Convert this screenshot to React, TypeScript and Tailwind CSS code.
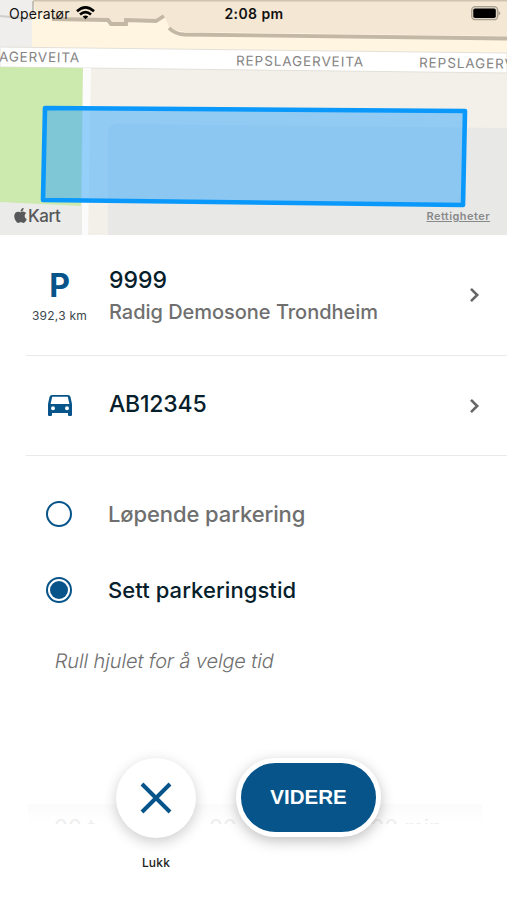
import React, { useState } from 'react';
import { FaApple } from 'react-icons/fa';

const ParkingMap = () => (
  <section className="relative h-[235px] w-full overflow-hidden">
    <svg className="block" width="507" height="235" viewBox="0 0 507 235">
      <rect width="507" height="235" fill="#f3f0ea" />
      <path d="M0 0H34V48H0Z" fill="#efeeec" />
      <path d="M0 16L32 19" stroke="#cfcdca" strokeWidth="2" />
      <path d="M32 0H507V54L32 48Z" fill="#fff5e0" />
      <path d="M33 0H507V36L186 32Q176 31 169 27L164 15L157 20L127 20V23H111L108 19L54 18L36 12Z" fill="#f4e7d3" />
      <path d="M52 19L108 20L111 24H126V20L156 21L164 16M169 28Q175 34 184 34.500L507 38.500" fill="none" stroke="#c2b8a5" strokeWidth="3.8" />
      <path d="M33 0.500H507" stroke="#cfc3b1" strokeWidth="2" />
      <path d="M33 1V14" stroke="#c6c1ba" strokeWidth="2" />
      <path d="M0 47L507 53V73L0 67Z" fill="#ffffff" stroke="#e3e0da" strokeWidth="1" />
      <path d="M108 235V134Q108 124 118 124L507 128V235Z" fill="#e8e8e7" />
      <path d="M0 202L82 206V235H0Z" fill="#ebebea" />
      <path d="M0 67L83 68L81 206L0 202Z" fill="#cce9ae" />
      <path d="M83 68H91L88 235H82Z" fill="#fbfbfb" />
      <path d="M45 108L465 111L463 205L43 200Z" fill="#38a9fb" fillOpacity="0.52" stroke="#0a99fb" strokeWidth="4.6" strokeLinejoin="round" />
    </svg>
    <svg className="absolute inset-0" width="507" height="235" fontFamily="Inter, sans-serif" fontSize="13.5" fill="#858483">
      <text x="-1" y="61.5" textLength="80" transform="rotate(0.7 0 61)">AGERVEITA</text>
      <text x="236" y="65.500" textLength="127" transform="rotate(0.5 236 65)">REPSLAGERVEITA</text>
      <text x="419" y="67.500" textLength="127" transform="rotate(0.7 419 67)">REPSLAGERVEITA</text>
    </svg>
    <div className="absolute bottom-[8px] left-[12px] flex items-center text-[#57585a]">
      <FaApple size={17} className="-mt-[2px] -mr-[1px]" />
      <span className="text-[17px] leading-[22px] font-medium tracking-[-0.4px]">Kart</span>
    </div>
    <a href="#" className="absolute right-[17px] bottom-[11px] text-[11px] leading-4 font-semibold tracking-[0.45px] text-[#88898a] underline">
      Rettigheter
    </a>
  </section>
);

const StatusBar = () => (
  <header className="absolute inset-x-0 top-0 flex h-[27px] items-center justify-between pr-[6px] pl-[9px] text-[#111]">
    <div className="flex w-[190px] items-center gap-[6px]">
      <span className="text-[14px] tracking-[0.25px]">Operatør</span>
      <svg className="-mt-[2px]" width="19" height="14" viewBox="0 0 19 14" fill="none" stroke="#000" strokeWidth="2.6">
        <path d="M1 5.300Q9.500-2.500 18 5.300" />
        <path d="M4 8.500Q9.500 3.700 15 8.500" />
        <path d="M9.500 13.300L6.700 10.500Q9.500 8.300 12.300 10.500Z" fill="#000" stroke="none" />
      </svg>
    </div>
    <span className="-ml-[2px] text-[14px] font-semibold tracking-[0.4px]">2:08 pm</span>
    <div className="flex w-[190px] justify-end">
      <svg className="-mt-[1px]" width="30" height="15" viewBox="0 0 30 15">
        <rect x="0.700" y="0.700" width="26" height="13" rx="3.500" fill="#e2d7c5" stroke="#a9a092" strokeWidth="1.300" />
        <rect x="2.300" y="2.500" width="22.500" height="9.500" rx="1.800" fill="#000" />
        <path d="M27.500 4.800Q31 7.200 27.500 9.700Z" fill="#a9a092" />
      </svg>
    </div>
  </header>
);

const Chevron = () => (
  <svg className="mr-[1px] shrink-0" width="11" height="16" viewBox="0 0 11 16" fill="none" stroke="#666" strokeWidth="2.600">
    <path d="M2 1.800L8.200 8L2 14.200" />
  </svg>
);

const CarIcon = () => (
  <svg width="24" height="21" viewBox="0 0 24 21">
    <path fill="#06548a" fillRule="evenodd" d="M4 0H20Q22 0 22.500 2L24 9V20Q24 21 23 21H21Q20 21 20 20V18H4V20Q4 21 3 21H1Q0 21 0 20V9L1.500 2Q2 0 4 0ZM4.200 1.800L2.600 9H21.400L19.800 1.800ZM5 11.300A2 2 0 1 0 5 15.300A2 2 0 1 0 5 11.300ZM19 11.300A2 2 0 1 0 19 15.300A2 2 0 1 0 19 11.300Z" />
  </svg>
);

const options = [
  { id: 'running', label: 'Løpende parkering', style: 'tracking-[-0.1px]' },
  { id: 'timed', label: 'Sett parkeringstid', style: 'tracking-[0.07px]' },
];

const App = () => {
  const [selected, setSelected] = useState('timed');

  return (
    <main className="relative flex h-[900px] w-[507px] flex-col overflow-hidden bg-white font-['Inter',sans-serif]">
      <ParkingMap />
      <StatusBar />

      {/* Zone and vehicle */}
      <button className="ml-[26px] flex h-[121px] items-center border-b border-[#e7e9ea] pr-[26px] text-left">
        <div className="flex w-[67px] flex-col items-center gap-[6px] pt-1">
          <span className="text-[32px] leading-8 font-bold text-[#06548a]">P</span>
          <span className="text-[12px] leading-4 tracking-[0.25px] whitespace-nowrap text-[#3b474c]">392,3 km</span>
        </div>
        <div className="ml-4 flex-1 pt-[2px]">
          <div className="text-[23px] leading-8 font-medium text-[#06202b]">9999</div>
          <div className="text-[20px] leading-8 font-medium tracking-[-0.03px] text-[#6f6f6f]">Radig Demosone Trondheim</div>
        </div>
        <Chevron />
      </button>
      <button className="ml-[26px] flex h-[100px] items-center border-b border-[#e7e9ea] pr-[26px] text-left">
        <div className="flex w-[67px] justify-center">
          <CarIcon />
        </div>
        <span className="ml-4 flex-1 pb-[2px] text-[23px] font-medium tracking-[-0.2px] text-[#06202b]">AB12345</span>
        <Chevron />
      </button>

      {/* Parking type */}
      <div className="flex flex-col pt-5 pl-[46px]">
        {options.map((option) => (
          <button key={option.id} onClick={() => setSelected(option.id)} className="flex h-[76px] items-center gap-9 text-left">
            <span className="flex size-[26px] items-center justify-center rounded-full border-2 border-[#06548a]">
              {selected === option.id && <span className="size-[18px] rounded-full bg-[#06548a]" />}
            </span>
            <span className={`text-[22px] font-medium ${option.style} ${selected === option.id ? 'text-[#06202b]' : 'text-[#6f6f6f]'}`}>
              {option.label}
            </span>
          </button>
        ))}
      </div>
      <p className="mt-[17px] ml-[55px] w-fit -skew-x-[10deg] text-[20px] leading-8 font-light tracking-[-0.12px] text-[#6f6f6f]">
        Rull hjulet for å velge tid
      </p>

      {/* Top edge of the time wheel */}
      <div className="mt-[127px] ml-[28px] h-[20px] w-[454px] shrink-0 overflow-hidden bg-linear-to-b from-[#fbfbfb] to-white pt-[9px]">
        <div className="flex justify-between pr-10 pl-[26px] text-[22px] leading-7 text-[#eeeeee]">
          <span>00 t</span>
          <span className="-ml-5">00</span>
          <span>00 min</span>
        </div>
      </div>

      {/* Actions */}
      <div className="absolute top-[758px] left-[116px] flex items-start gap-10">
        <div className="flex flex-col items-center gap-[17px]">
          <button className="flex size-20 items-center justify-center rounded-full bg-white shadow-[0_4px_14px_rgba(0,0,0,0.2)]">
            <svg width="32" height="32" viewBox="0 0 32 32" stroke="#06548a" strokeWidth="4">
              <path d="M2 2L30 30M30 2L2 30" />
            </svg>
          </button>
          <span className="text-[12px] leading-4 font-medium tracking-[0.2px] text-[#222]">Lukk</span>
        </div>
        <button className="h-[79px] w-[145px] rounded-full border-[5px] border-white bg-[#06548a] font-['Liberation_Sans',sans-serif] text-[20.5px] font-bold text-white shadow-[0_4px_14px_rgba(0,0,0,0.25)]">
          VIDERE
        </button>
      </div>
    </main>
  );
};

export default App;
